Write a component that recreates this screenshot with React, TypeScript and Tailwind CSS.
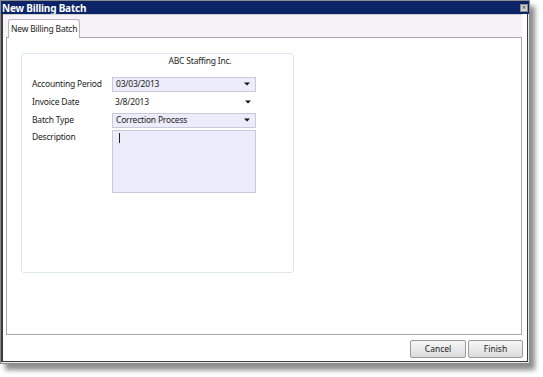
export default function App() {
  const font = { fontFamily: '"Noto Sans", "Open Sans", sans-serif' };

  return (
    <div className="w-[543px] h-[377px] bg-white relative" style={font}>
      {/* Dialog window */}
      <div className="w-[530px] h-[364px] flex flex-col bg-[#e9e9e9] border border-[#8c8c8c] shadow-[5px_6px_5px_rgba(0,0,0,0.45)]">
        {/* Title bar */}
        <div className="h-[13px] bg-[#0b2468] flex items-center justify-between pl-[1px] pr-[1px]">
          <span className="text-[10px] leading-none font-bold text-white tracking-[-0.2px]">New Billing Batch</span>
          <div className="w-[8px] h-[8px] bg-[#d4d4d4] border border-[#8a8a8a] flex items-center justify-center text-[7px] leading-none text-[#333]">
            ×
          </div>
        </div>

        {/* Body */}
        <div className="flex-1 flex flex-col bg-white border-l-2 border-[#3c3c3c] border-r border-b mr-[1px] mb-[1px]">
          {/* Tab strip */}
          <div className="h-[23px] bg-[#f6f3f6] flex items-end pl-[5px] pt-[4px] border-t border-[#cfcfcf] mr-[5px]">
            <div className="h-[19px] px-[2px] bg-white border border-b-0 border-[#b4b4b4] rounded-t-[3px] flex items-center text-[8.5px] tracking-[-0.2px] text-[#222] relative -mb-[1px]">
              New Billing Batch
            </div>
          </div>

          {/* Tab panel */}
          <div className="h-[298px] bg-white border border-[#a8a8a8] mr-[5px] ml-[3px] pt-[15px] pl-[14px]">
            <div className="w-[273px] h-[220px] border border-[#dfe5ee] rounded-[3px] flex flex-col">
              <div className="text-[8.5px] tracking-[-0.2px] text-[#222] text-center pl-[85px] h-[13px] leading-[13px]">ABC Staffing Inc.</div>

              <div className="mt-[10px] pl-[10px] flex flex-col gap-[4px] text-[8.5px] tracking-[-0.2px] text-[#222]">
                <div className="flex items-center h-[14px]">
                  <span className="w-[80px]">Accounting Period</span>
                  <div className="w-[144px] h-[15px] bg-[#ececfb] border border-[#c9c9dd] flex items-center justify-between pl-[3px] pr-[5px]">
                    <span>03/03/2013</span>
                    <Caret />
                  </div>
                </div>
                <div className="flex items-center h-[14px]">
                  <span className="w-[80px]">Invoice Date</span>
                  <div className="w-[144px] h-[15px] flex items-center justify-between pl-[3px] pr-[5px]">
                    <span>3/8/2013</span>
                    <Caret />
                  </div>
                </div>
                <div className="flex items-center h-[14px]">
                  <span className="w-[80px]">Batch Type</span>
                  <div className="w-[144px] h-[15px] bg-[#ececfb] border border-[#c9c9dd] flex items-center justify-between pl-[3px] pr-[5px]">
                    <span>Correction Process</span>
                    <Caret />
                  </div>
                </div>
                <div className="flex items-start -mt-[1px]">
                  <span className="w-[80px] leading-[12px] pt-[1px]">Description</span>
                  <div className="w-[144px] h-[63px] bg-[#ececfb] border border-[#c9c9dd] pl-[6px] pt-[2px]">
                    <div className="w-[1px] h-[10px] bg-[#222]" />
                  </div>
                </div>
              </div>
            </div>
          </div>

          {/* Button bar */}
          <div className="flex-1 flex justify-end items-start pt-[5px] pr-[4px] gap-[2px]">
            <button className="w-[56px] h-[18px] rounded-[2px] border border-[#9a9a9a] bg-gradient-to-b from-[#f6f6f6] to-[#dcdcdc] text-[8.5px] text-[#222]">
              Cancel
            </button>
            <button className="w-[55px] h-[18px] rounded-[2px] border border-[#9a9a9a] bg-gradient-to-b from-[#f6f6f6] to-[#dcdcdc] text-[8.5px] text-[#222]">
              Finish
            </button>
          </div>
        </div>
      </div>
    </div>
  );
}

function Caret() {
  return (
    <svg width="6" height="4" viewBox="0 0 6 4">
      <path d="M0 0.5 L6 0.5 L3 3.5 Z" fill="#111" />
    </svg>
  );
}
